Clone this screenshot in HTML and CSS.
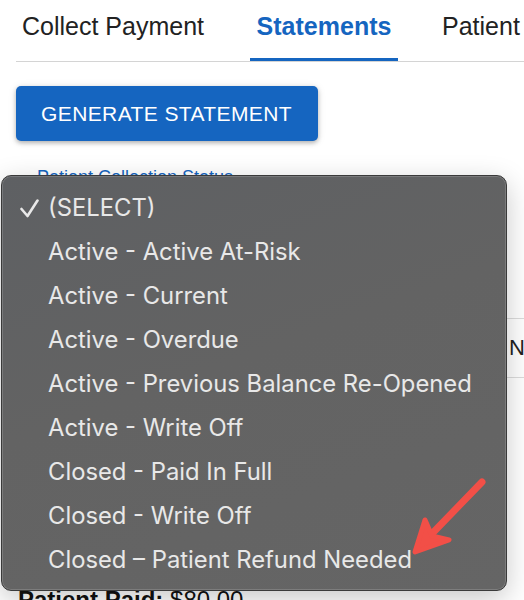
FILE: index.html
```html
<!DOCTYPE html>
<html>
<head>
<meta charset="utf-8">
<link rel="stylesheet" href="styles.css">
</head>
<body>
<div class="page">
  <nav class="tabs">
    <div class="tab tab-first">Collect Payment</div>
    <div class="tab tab-active">Statements</div>
    <div class="tab tab-last">Patient Ledger</div>
  </nav>
  <button class="btn">GENERATE STATEMENT</button>
  <div class="field">
    <div class="field-label">Patient Collection Status</div>
    <div class="field-select">(SELECT)</div>
  </div>
  <div class="table-head">
    <div class="th th-date">Date</div>
    <div class="th th-amount">Amount</div>
    <div class="th th-type">Type</div>
    <div class="th th-notes">Notes</div>
  </div>
  <div class="summary"><span class="summary-label">Patient Paid:</span> $80.00</div>
</div>

<div class="menu">
  <div class="item item-checked"><svg class="check" viewBox="0 0 20 20" width="20" height="20"><polyline points="1.5,10 7.5,17 17.5,1.5" fill="none" stroke="#e9e9e9" stroke-width="2.6" stroke-linecap="round" stroke-linejoin="round"/></svg>(SELECT)</div>
  <div class="item">Active - Active At-Risk</div>
  <div class="item">Active - Current</div>
  <div class="item">Active - Overdue</div>
  <div class="item">Active - Previous Balance Re-Opened</div>
  <div class="item">Active - Write Off</div>
  <div class="item">Closed - Paid In Full</div>
  <div class="item">Closed - Write Off</div>
  <div class="item">Closed – Patient Refund Needed</div>
</div>

<svg class="arrow" viewBox="400 470 100 100" width="100" height="100">
  <line x1="482" y1="482" x2="422" y2="544" stroke="#f24f47" stroke-width="7" stroke-linecap="round"/>
  <polygon points="415,552 425,520 432,536 449,540" fill="#f24f47" stroke="#f24f47" stroke-width="5" stroke-linejoin="round"/>
</svg>
</body>
</html>
```

FILE: styles.css
```css
html, body {
  margin: 0;
  padding: 0;
  background: #ffffff;
  overflow: hidden;
}

body {
  width: 524px;
  height: 600px;
  position: relative;
  font-family: "Liberation Sans", Arial, sans-serif;
}

.page {
  padding-left: 16px;
}

.tabs {
  display: flex;
  border-bottom: 1px solid #d4d4d4;
  white-space: nowrap;
  overflow: hidden;
}

.tab {
  padding-top: 11px;
  box-sizing: border-box;
  height: 62px;
  margin-bottom: -1px;
  line-height: 30px;
  font-size: 25px;
  color: #222222;
  border-bottom: 4px solid transparent;
  flex: none;
}

.tab-first {
  width: 234px;
  padding-left: 6px;
}

.tab-active {
  width: 148px;
  text-align: center;
  font-weight: bold;
  color: #1565c0;
  border-bottom-color: #1565c0;
}

.tab-last {
  padding-left: 44px;
}

.btn {
  display: block;
  margin-top: 24px;
  width: 302px;
  height: 55px;
  padding: 0 0 0 25px;
  text-align: left;
  border: none;
  border-radius: 5px;
  background: #1565c0;
  color: #ffffff;
  font-family: "Liberation Sans", Arial, sans-serif;
  font-size: 21px;
  letter-spacing: 0.4px;
  box-shadow: 0 2px 4px rgba(0, 0, 0, 0.25), 0 1px 8px rgba(0, 0, 0, 0.1);
}

.field {
  margin-top: 26px;
  padding-left: 21px;
}

.field-label {
  font-size: 18px;
  line-height: 20px;
  color: #1565c0;
}

.field-select {
  margin-top: 8px;
  height: 56px;
  width: 300px;
  border-bottom: 1px solid #999;
  font-size: 18px;
  line-height: 56px;
}

.table-head {
  margin-top: 66px;
  display: flex;
  height: 58px;
  border-top: 1px solid #dcdcdc;
  border-bottom: 1px solid #dcdcdc;
  white-space: nowrap;
  overflow: hidden;
}

.th {
  flex: none;
  font-size: 22px;
  line-height: 58px;
  color: #222;
}

.th-date { width: 140px; }
.th-amount { width: 180px; }
.th-type { width: 173px; }

.summary {
  margin-top: 208px;
  padding-left: 2px;
  font-size: 24px;
  line-height: 28px;
  color: #111;
  white-space: nowrap;
}

.summary-label {
  font-weight: bold;
}

.menu {
  position: absolute;
  left: 1px;
  top: 175px;
  width: 506px;
  height: 416px;
  box-sizing: border-box;
  padding-top: 10px;
  border: 1px solid #3a3a3a;
  border-radius: 10px;
  background: linear-gradient(160deg, #5e6063 0%, #636363 45%, #656565 100%);
  box-shadow: inset 0 0 0 1px rgba(255, 255, 255, 0.16), 0 8px 28px rgba(0, 0, 0, 0.22);
  font-family: Inter, "Noto Sans", sans-serif;
}

.item {
  position: relative;
  height: 44px;
  line-height: 44px;
  padding-left: 46px;
  font-size: 23.8px;
  color: #e8e8e8;
  white-space: nowrap;
}

.check {
  position: absolute;
  left: 18px;
  top: 13px;
}

.arrow {
  position: absolute;
  left: 400px;
  top: 470px;
}
```
